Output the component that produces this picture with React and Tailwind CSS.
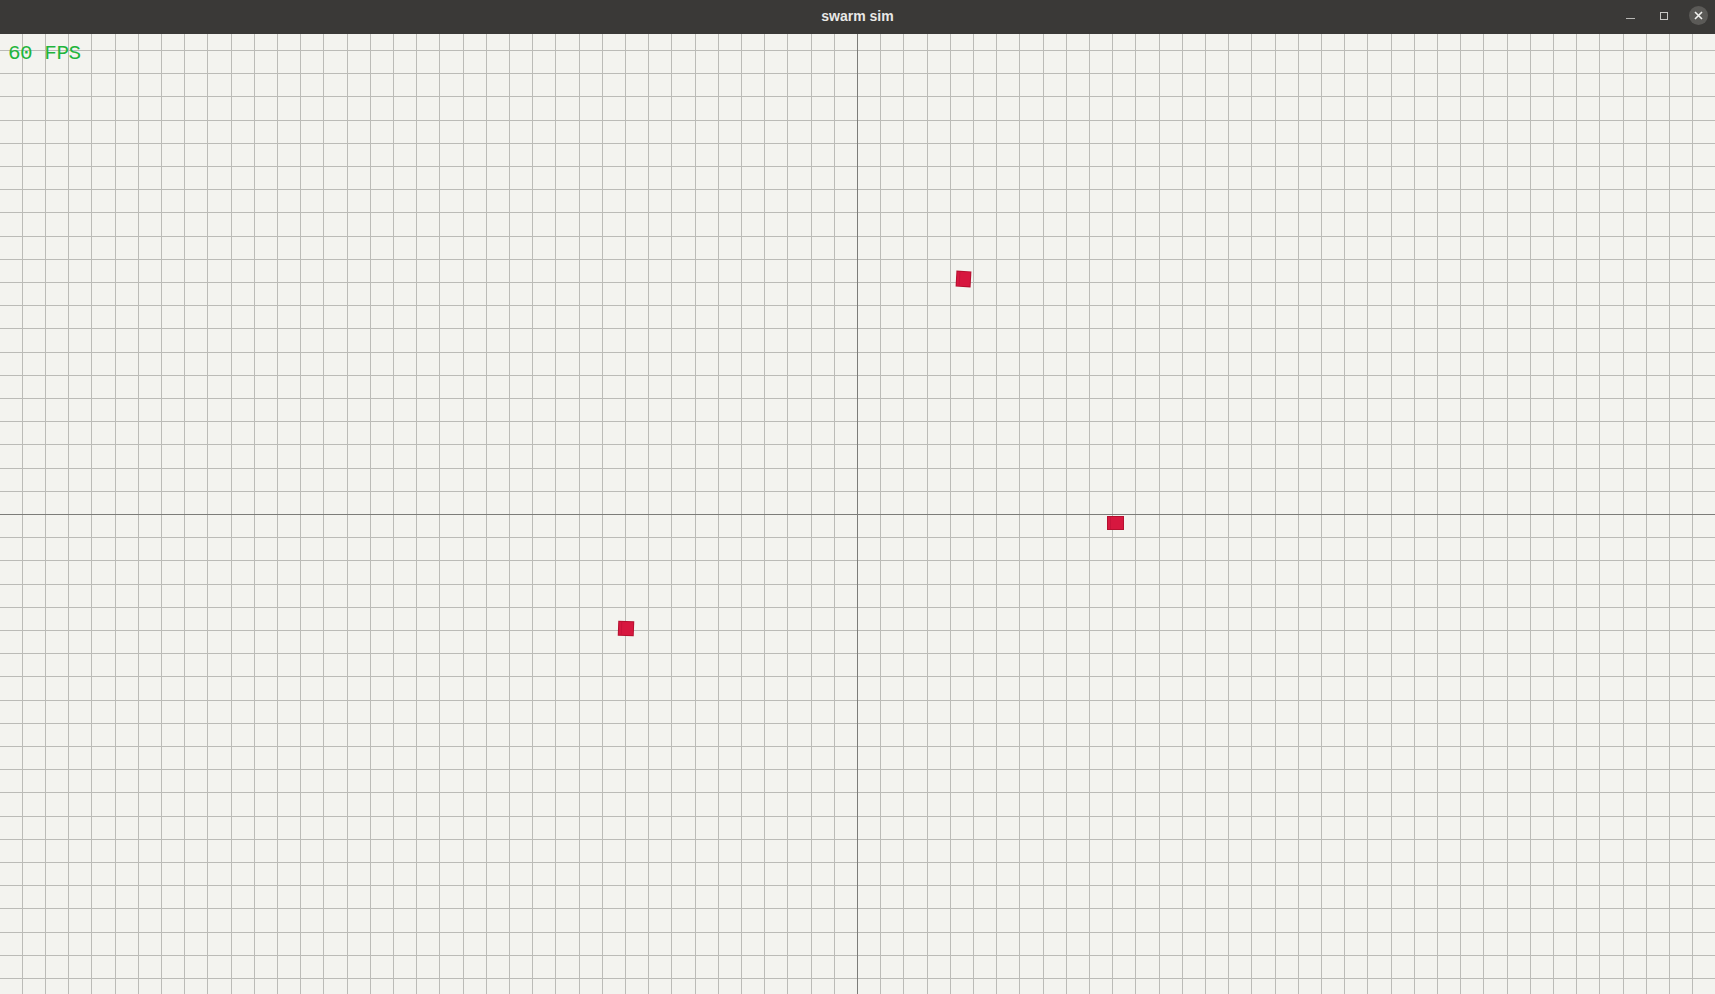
import React from "react";

const W = 1715;
const H = 960;
const STEP = 23.2;
const CX = 857;
const CY = 480;

function gridLines() {
  const xs = [];
  const ys = [];
  for (let k = -40; k <= 40; k++) {
    const x = Math.round(CX + k * STEP);
    if (x >= 0 && x < W && k !== 0) xs.push(x);
    const y = Math.round(CY + k * STEP);
    if (y >= 0 && y < H && k !== 0) ys.push(y);
  }
  return { xs, ys };
}

// agents in canvas coords (canvas starts under the 34px title bar)
const agents = [
  { x: 956, y: 237, w: 15, h: 16, rot: 3 },
  { x: 1107, y: 482, w: 17, h: 14, rot: 0 },
  { x: 618, y: 587, w: 16, h: 15, rot: 2 },
];

function Canvas() {
  const { xs, ys } = gridLines();
  return (
    <svg width={W} height={H} className="block" shapeRendering="crispEdges">
      <rect x="0" y="0" width={W} height={H} fill="#f3f3ef" />
      {xs.map((x) => (
        <rect key={"v" + x} x={x} y="0" width="1" height={H} fill="#bbbbb7" />
      ))}
      {ys.map((y) => (
        <rect key={"h" + y} x="0" y={y} width={W} height="1" fill="#bbbbb7" />
      ))}
      <rect x={CX} y="0" width="1" height={H} fill="#7c7c79" />
      <rect x="0" y={CY} width={W} height="1" fill="#7c7c79" />
      {agents.map((a, i) => (
        <g
          key={i}
          transform={`rotate(${a.rot} ${a.x + a.w / 2} ${a.y + a.h / 2})`}
          shapeRendering="geometricPrecision"
        >
          <rect x={a.x} y={a.y} width={a.w} height={a.h} fill="#b5102f" />
          <rect x={a.x + 1} y={a.y + 1} width={a.w - 2} height={a.h - 2} fill="#d7173f" />
          <rect x={a.x + 3} y={a.y + 1} width="1" height={a.h - 2} fill="#c8133a" />
        </g>
      ))}
    </svg>
  );
}

export default function App() {
  return (
    <div className="w-[1715px] h-[994px] flex flex-col overflow-hidden bg-[#f3f3ef]">
      {/* title bar */}
      <div className="h-[34px] shrink-0 bg-[#3a3937] flex items-center relative">
        <div className="flex-1 text-center text-[14px] font-bold text-[#e8e8e6] font-['Liberation_Sans',Arial,sans-serif] -mt-[2px]">
          swarm sim
        </div>
        <div className="absolute right-[7px] top-0 h-[34px] flex items-center">
          <div className="w-[9px] h-[1px] bg-[#b8b8b5] mt-[3px]" />
          <div className="w-[8px] h-[8px] border border-[#c8c8c5] -mt-[2px] ml-[25px]" />
          <div className="w-[19px] h-[19px] rounded-full bg-[#5b5a57] flex items-center justify-center -mt-[4px] ml-[21px]">
            <svg width="9" height="9" viewBox="0 0 9 9">
              <path d="M1 1 L8 8 M8 1 L1 8" stroke="#f2f2f0" strokeWidth="1.6" />
            </svg>
          </div>
        </div>
      </div>
      {/* sim canvas */}
      <div className="relative flex-1">
        <Canvas />
        <div className="absolute left-[8px] top-[9px] text-[21px] leading-none text-[#1fb53c] font-['Liberation_Mono','DejaVu_Sans_Mono',monospace] tracking-[-0.5px]">
          60 FPS
        </div>
      </div>
    </div>
  );
}
